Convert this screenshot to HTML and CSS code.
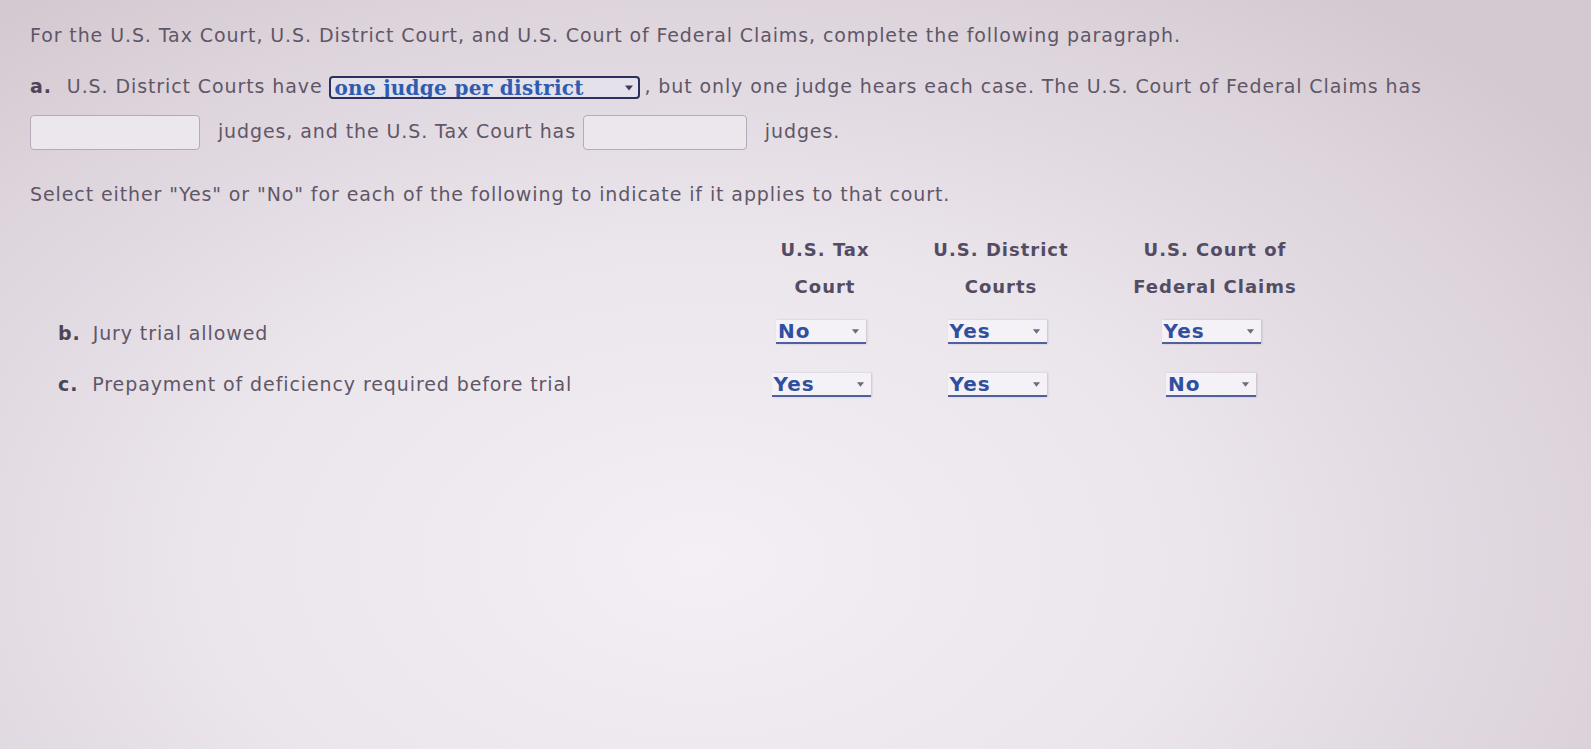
FILE: index.html
```html
<!DOCTYPE html>
<html lang="en">
<head>
  <meta charset="UTF-8">
  <title>Federal Courts</title>
  <link rel="stylesheet" href="styles.css">
</head>
<body>
  <div class="question">
    <p class="intro">For the U.S. Tax Court, U.S. District Court, and U.S. Court of Federal Claims, complete the following paragraph.</p>

    <!-- part a: fill-in paragraph -->
    <p class="part"><span class="letter">a.</span>U.S. District Courts have <span class="pick long">one judge per district<svg class="caret" viewBox="0 0 10 8"><path d="M1 2h8L5 7z"/></svg></span>, but only one judge hears each case. The U.S. Court of Federal Claims has<br>
      <span class="blank"></span> judges, and the U.S. Tax Court has <span class="blank"></span> judges.</p>

    <p class="instr">Select either "Yes" or "No" for each of the following to indicate if it applies to that court.</p>

    <!-- parts b and c: yes/no grid -->
    <div class="grid">
      <div></div>
      <div class="head">U.S. Tax<br>Court</div>
      <div class="head">U.S. District<br>Courts</div>
      <div class="head">U.S. Court of<br>Federal Claims</div>

      <div class="label"><span class="letter">b.</span>Jury trial allowed</div>
      <div class="cell"><span class="pick no">No<svg class="caret" viewBox="0 0 10 8"><path d="M1 2h8L5 7z"/></svg></span></div>
      <div class="cell"><span class="pick">Yes<svg class="caret" viewBox="0 0 10 8"><path d="M1 2h8L5 7z"/></svg></span></div>
      <div class="cell"><span class="pick">Yes<svg class="caret" viewBox="0 0 10 8"><path d="M1 2h8L5 7z"/></svg></span></div>

      <div class="label"><span class="letter wide">c.</span>Prepayment of deficiency required before trial</div>
      <div class="cell"><span class="pick">Yes<svg class="caret" viewBox="0 0 10 8"><path d="M1 2h8L5 7z"/></svg></span></div>
      <div class="cell"><span class="pick">Yes<svg class="caret" viewBox="0 0 10 8"><path d="M1 2h8L5 7z"/></svg></span></div>
      <div class="cell"><span class="pick no">No<svg class="caret" viewBox="0 0 10 8"><path d="M1 2h8L5 7z"/></svg></span></div>
    </div>
  </div>
</body>
</html>
```

FILE: styles.css
```css
html, body { height: 100%; }
body {
  margin: 0;
  font-family: "DejaVu Sans", Verdana, sans-serif;
  font-size: 19px;
  letter-spacing: 0.9px;
  color: #5f5767;
  background: radial-gradient(ellipse 1100px 700px at 700px 560px, #f3eff4 0%, #ebe5ec 45%, #ddd4dc 80%, #d5c9d1 100%);
}
.question { padding: 0 30px; }

.intro { margin: 22px 0 0; line-height: 26px; }
.letter { font-weight: bold; color: #4d4556; margin-right: 12px; }
.letter.wide { margin-right: 14px; }
.part .letter { margin-right: 15px; }

.part { margin: 16px 0 0; line-height: 45px; }
.blank {
  display: inline-block; vertical-align: middle;
  width: 168px; height: 33px; margin-right: 11px;
  border: 1.5px solid #b5aaba; border-radius: 4px; background: #ece7ed;
}
.part .blank + .blank { width: 162px; }

/* dropdown look-alike */
.pick {
  display: inline-flex; align-items: center; justify-content: space-between;
  box-sizing: border-box; width: 99px; height: 24px; padding: 0 6px 0 2px;
  font-weight: bold; font-size: 20px; letter-spacing: 1px;
  color: #30509f; background: #f5f2f7;
  border-bottom: 2px solid #50609e;
  box-shadow: 1px 0 2px rgba(90, 80, 110, 0.25);
  vertical-align: middle;
}
.pick.no { width: 90px; }
.pick.long {
  width: 311px; height: 23px; padding: 2px 4px 0 3px; margin-right: 4px;
  font-family: "DejaVu Serif", Georgia, serif; font-size: 20px; letter-spacing: 0.3px;
  color: #2e5cb0;
  border: 2px solid #2c3060; border-radius: 4px; background: #e4e1ea; overflow: hidden;
  box-shadow: none; line-height: 23px;
}
.pick.long .caret { fill: #3a3d60; width: 10px; height: 9px; margin-top: -2px; }
.caret { width: 9px; height: 8px; fill: #6d6a80; flex: none; }

.instr { margin: 27px 0 0; line-height: 26px; }

.grid {
  display: grid;
  grid-template-columns: 715px 160px 192px 236px;
  margin-top: 24px;
}
.head {
  text-align: center; font-weight: bold; font-size: 18px; letter-spacing: 1px;
  line-height: 37px; color: #544c62;
}
.label { padding-left: 28px; line-height: 51px; }
.cell { display: flex; align-items: center; justify-content: center; padding-right: 8px; }
.grid > :nth-child(5) { margin-top: 3px; }
```
